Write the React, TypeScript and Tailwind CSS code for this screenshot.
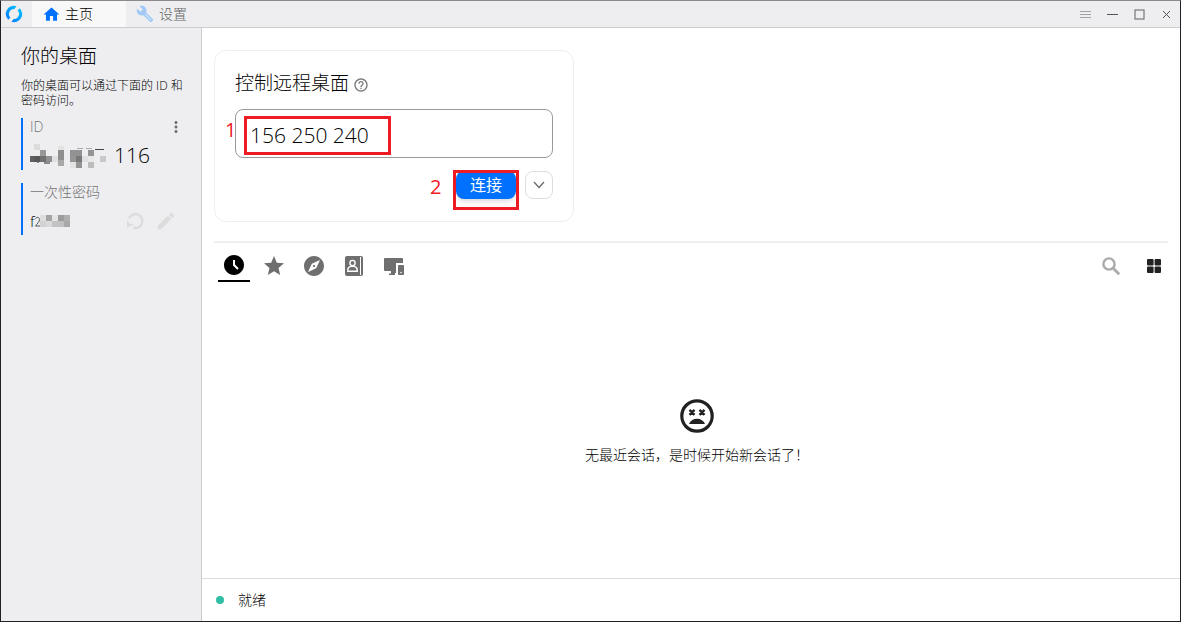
import { useState } from "react";
import {
  MdAccessTimeFilled,
  MdEdit,
  MdExplore,
  MdHelpOutline,
  MdHome,
  MdMoreVert,
  MdStar,
} from "react-icons/md";

type Block = [x: number, y: number, fill: string];

const idBlocks: Block[] = [
  [8, 4, "#dcdcdc"],
  [32, 6, "#e3e3e4"],
  [14, 10, "#989898"],
  [32, 10, "#8f8f8f"],
  [44, 10, "#929292"],
  [50, 10, "#929292"],
  [62, 10, "#959595"],
  [4, 16, "#606060"],
  [8, 16, "#585858"],
  [14, 16, "#707070"],
  [20, 16, "#8f8f8f"],
  [26, 16, "#e0e0e2"],
  [32, 16, "#8f8f8f"],
  [44, 16, "#959595"],
  [50, 16, "#787878"],
  [56, 16, "#e0e0e2"],
  [62, 16, "#e8e8e8"],
  [74, 16, "#c8c8c9"],
  [32, 20, "#a8a8a8"],
  [44, 22, "#e2e2e3"],
  [50, 22, "#949494"],
  [62, 22, "#bdbdbe"],
];

const passwordBlocks: Block[] = [
  [14, 6, "#dededf"],
  [20, 6, "#a3a3a3"],
  [26, 6, "#e4e4e5"],
  [32, 6, "#9c9c9c"],
  [38, 6, "#b0b0b0"],
  [14, 12, "#d2d2d3"],
  [20, 12, "#dadadb"],
  [26, 12, "#c3c3c4"],
  [32, 12, "#c0c0c1"],
  [38, 12, "#a8a8a8"],
];

function Mosaic({ blocks }: { blocks: Block[] }) {
  return (
    <>
      {blocks.map(([x, y, fill]) => (
        <rect key={`${x}-${y}`} x={x} y={y} width="6" height="6" fill={fill} />
      ))}
    </>
  );
}

function LogoIcon() {
  return (
    <svg width="18" height="18" viewBox="0 0 18 18" fill="none">
      <defs>
        <linearGradient id="logo" x1="1" y1="17" x2="16" y2="2" gradientUnits="userSpaceOnUse">
          <stop offset="0" stopColor="#0071ff" />
          <stop offset="1" stopColor="#00c8ff" />
        </linearGradient>
      </defs>
      <path
        d="M11.6 1.3A8.1 8.1 0 0 0 3.2 14.7L5.4 12.5A5 5 0 0 1 9.3 4z"
        fill="url(#logo)"
      />
      <path
        d="M6.4 16.7A8.1 8.1 0 0 0 14.8 3.3L12.6 5.5A5 5 0 0 1 8.7 14z"
        fill="url(#logo)"
      />
    </svg>
  );
}

function WrenchIcon() {
  return (
    <svg width="18" height="18" viewBox="0 0 24 24">
      <path
        fill="#a0c9f5"
        d="M22.7 19l-9.1-9.1c.9-2.3.4-5-1.5-6.9-2-2-5-2.4-7.4-1.3L9 6 6 9 1.6 4.7C.4 7.1.9 10.1 2.9 12.1c1.9 1.9 4.6 2.4 6.9 1.5l9.1 9.1c.4.4 1 .4 1.4 0l2.3-2.3c.5-.4.5-1.1.1-1.4z"
      />
      <path d="M12.5 12.5l7 7" stroke="#d5e6f8" strokeWidth="1.4" strokeLinecap="round" />
    </svg>
  );
}

function RefreshIcon() {
  return (
    <svg width="20" height="20" viewBox="0 0 20 20" fill="none" stroke="currentColor">
      <path d="M4 7.2A7 7 0 1 1 8 16.6" strokeWidth="2.4" />
      <path d="M2 9.5v7l7.500-3.500H5z" fill="currentColor" stroke="none" />
    </svg>
  );
}

function SearchIcon() {
  return (
    <svg width="25" height="25" viewBox="0 0 25 25" fill="none" stroke="currentColor">
      <circle cx="10" cy="10" r="5.6" strokeWidth="2.4" />
      <path d="M14.2 14.2l6 6" strokeWidth="2.8" />
    </svg>
  );
}

function AddressBookIcon() {
  return (
    <svg width="20" height="20" viewBox="0 0 20 20" fill="none">
      <rect x="1" y="0" width="18" height="20" rx="2" fill="#6f6f6f" />
      <path d="M16.5 1v18" stroke="#fff" strokeWidth="1" />
      <circle cx="8.5" cy="7" r="2.6" stroke="#fff" strokeWidth="1.4" />
      <path
        d="M3.8 15.3v-1.5c0-1.8 1.3-3 3-3.5h3.4c1.7.5 3 1.7 3 3.5v1.5z"
        stroke="#fff"
        strokeWidth="1.4"
      />
    </svg>
  );
}

function DevicesIcon() {
  return (
    <svg width="22" height="20" viewBox="0 0 22 20" fill="#6f6f6f">
      <rect x="1" y="2" width="19" height="13" rx="1" />
      <path d="M8 14h5v3h-1v2H6v-1.5h2z" />
      <rect x="13" y="7" width="9" height="13" fill="#fff" />
      <rect x="15" y="9" width="6" height="10" rx="1" />
      <circle cx="18" cy="16.500" r="0.8" fill="#fff" />
    </svg>
  );
}

function DizzyFaceIcon() {
  return (
    <svg width="34" height="34" viewBox="0 0 34 34" fill="none" stroke="#212121">
      <circle cx="17" cy="17" r="15.2" strokeWidth="3.2" />
      <path d="M9.5 10.8l5 5m0-5l-5 5M19.5 10.8l5 5m0-5l-5 5" strokeWidth="2.4" />
      <path d="M9 25c1.2-3.3 4.3-5.3 8-5.3s6.8 2 8 5.3z" fill="#212121" stroke="none" />
    </svg>
  );
}

const peerTabs = [
  { label: "最近会话", icon: <MdAccessTimeFilled size={24} /> },
  { label: "收藏", icon: <MdStar size={24} /> },
  { label: "已发现", icon: <MdExplore size={24} /> },
  { label: "地址簿", icon: <AddressBookIcon /> },
  { label: "可访问的设备", icon: <DevicesIcon /> },
];

function TitleBar() {
  return (
    <header className="flex h-[27px] border-b border-[#cdcdcf] bg-[#eeeef0]">
      <div className="flex w-[31px] items-center pl-1">
        <LogoIcon />
      </div>
      <nav className="flex text-sm">
        <a href="#home" className="flex w-[94px] items-center gap-1 bg-[#f8f8f8] pl-[10px] text-black">
          <MdHome size={19} color="#0071ff" />
          主页
        </a>
        <a href="#settings" className="flex items-center gap-[5px] pl-[10px] text-[#666]">
          <WrenchIcon />
          设置
        </a>
      </nav>
      <div className="ml-auto flex">
        <button aria-label="菜单" className="flex w-[27px] items-center justify-center">
          <svg width="11" height="9" viewBox="0 0 11 9" stroke="#a2a2a4">
            <path d="M0 1.5h11M0 4.5h11M0 7.5h11" />
          </svg>
        </button>
        <button aria-label="最小化" className="flex w-[27px] items-center justify-center">
          <svg width="11" height="9" viewBox="0 0 11 9" stroke="#555">
            <path d="M0 4.5h11" />
          </svg>
        </button>
        <button aria-label="最大化" className="flex w-[27px] items-center justify-center">
          <svg width="11" height="11" viewBox="0 0 11 11" fill="none" stroke="#77777a">
            <rect x="1" y="1" width="9" height="9" strokeWidth="1.2" />
          </svg>
        </button>
        <button aria-label="关闭" className="flex w-[27px] items-center justify-center">
          <svg width="9" height="9" viewBox="0 0 9 9" stroke="#555">
            <path d="M1 1l7 7M8 1l-7 7" />
          </svg>
        </button>
      </div>
    </header>
  );
}

function Sidebar() {
  return (
    <aside className="w-[201px] shrink-0 border-r border-[#cdcdcf] bg-[#eeeef0] pt-[14px] pr-4 pl-5">
      <h1 className="text-[19px] leading-7 text-black">你的桌面</h1>
      <p className="mt-2 text-xs leading-[15px] text-black">
        你的桌面可以通过下面的 ID 和密码访问。
      </p>
      <section className="mt-[10px] h-[52px] border-l-2 border-[#0071ff] pl-[7px]">
        <div className="flex h-[18px] items-center justify-between text-sm text-[#757577]">
          ID
          <button aria-label="更多" className="text-[#6f6f6f]">
            <MdMoreVert size={18} />
          </button>
        </div>
        <div className="flex h-10 items-center text-[21px] text-black">
          <svg width="84" height="32" viewBox="4 0 84 32" role="img" aria-label="ID">
            <path d="M3 18h7M12 19v4M18 23h6" stroke="#222" />
            <path d="M51 8.5h6M60 8.5h6" stroke="#aaa" />
            <path d="M69 9.5h9" stroke="#444" />
            <Mosaic blocks={idBlocks} />
          </svg>
          116
        </div>
      </section>
      <section className="mt-[13px] h-[52px] border-l-2 border-[#0071ff] pl-[7px]">
        <div className="flex h-[18px] items-center text-sm text-[#757577]">一次性密码</div>
        <div className="flex h-10 items-center pr-2 text-[15px] text-black">
          f
          <svg width="40" height="24" viewBox="9 0 40 24" role="img" aria-label="密码">
            <path d="M9.5 10c1-2.5 4-2 4 .5 0 2-2 4-4 6.5h5" fill="none" stroke="#555" />
            <Mosaic blocks={passwordBlocks} />
          </svg>
          <div className="ml-auto flex items-center gap-[10px] text-[#dcdcdd]">
            <button aria-label="刷新密码">
              <RefreshIcon />
            </button>
            <button aria-label="修改密码">
              <MdEdit size={22} />
            </button>
          </div>
        </div>
      </section>
    </aside>
  );
}

function ConnectCard() {
  const [remoteId, setRemoteId] = useState("156 250 240");

  return (
    <form
      onSubmit={(e) => e.preventDefault()}
      className="h-[172px] w-[360px] rounded-xl border border-[#eee] px-5 pt-[18px]"
    >
      <div className="flex items-center gap-1">
        <label htmlFor="remote-id" className="text-[19px] leading-7 text-black">
          控制远程桌面
        </label>
        <MdHelpOutline size={16} color="#777" className="mt-1" />
      </div>
      <div className="relative mt-3">
        <input
          id="remote-id"
          type="text"
          value={remoteId}
          onChange={(e) => setRemoteId(e.target.value)}
          className="h-[49px] w-full rounded-lg border border-[#999] px-[14px] pt-[2px] text-[21px] text-black outline-none"
        />
        <span className="pointer-events-none absolute top-[7px] left-[9px] h-[39px] w-[147px] border-3 border-[#ed1c24]" />
        <span className="absolute top-[7px] -left-[10px] text-xl leading-7 font-normal text-[#ed1c24]">1</span>
      </div>
      <div className="mt-[13px] flex justify-end gap-[9px]">
        <div className="relative">
          <span className="absolute top-0 -left-[26px] text-xl leading-8 font-normal text-[#ed1c24]">2</span>
          <button
            type="submit"
            className="flex h-7 w-[60px] items-center justify-center rounded-lg bg-[#0071ff] text-base font-normal text-white shadow-md"
          >
            连接
          </button>
          <span className="pointer-events-none absolute -top-px -left-[3px] h-10 w-[66px] border-3 border-[#ed1c24]" />
        </div>
        <button
          type="button"
          aria-label="更多连接方式"
          className="flex size-7 items-center justify-center rounded-lg border border-[#ddd]"
        >
          <svg width="12" height="8" viewBox="0 0 12 8" fill="none" stroke="#666" strokeWidth="1.2">
            <path d="M1 1l5 5.5L11 1" />
          </svg>
        </button>
      </div>
    </form>
  );
}

function PeerTabs() {
  const [active, setActive] = useState(0);

  return (
    <div className="mr-3 flex h-[39px] items-stretch">
      <div className="flex gap-2 pl-1">
        {peerTabs.map((tab, index) => (
          <button
            key={tab.label}
            aria-label={tab.label}
            onClick={() => setActive(index)}
            className={
              index === active
                ? "flex w-8 items-center justify-center border-b-2 border-black pt-[7px] text-black"
                : "flex w-8 items-center justify-center border-b-2 border-transparent pt-[9px] text-[#6f6f6f]"
            }
          >
            {tab.icon}
          </button>
        ))}
      </div>
      <div className="ml-auto flex items-center gap-5 pt-[7px] pr-1">
        <button aria-label="搜索" className="text-[#aaa]">
          <SearchIcon />
        </button>
        <button aria-label="视图" className="text-[#222]">
          <svg width="20" height="20" viewBox="0 0 20 20" fill="currentColor">
            <rect x="3" y="3" width="6.6" height="6.4" rx="1" />
            <rect x="10.6" y="3" width="6.4" height="6.4" rx="1" />
            <rect x="3" y="10.6" width="6.6" height="6.4" rx="1" />
            <rect x="10.6" y="10.6" width="6.4" height="6.4" rx="1" />
          </svg>
        </button>
      </div>
    </div>
  );
}

export default function App() {
  return (
    <div className="flex min-h-screen flex-col border border-t-[#8a888c] border-r-[#222026] border-b-[#222026] border-l-[#222026] bg-white font-['Open_Sans','Noto_Sans_CJK_SC',sans-serif] font-light">
      <TitleBar />
      <div className="flex grow">
        <Sidebar />
        <main className="flex min-w-0 grow flex-col">
          <div className="flex grow flex-col pt-[22px] pl-3">
            <ConnectCard />
            <hr className="mt-[19px] mr-3 border-t-2 border-[#efefef]" />
            <PeerTabs />
            <div className="flex grow flex-col items-center justify-center gap-3 pt-[3px] text-sm text-black">
              <DizzyFaceIcon />
              <p>无最近会话，是时候开始新会话了！</p>
            </div>
          </div>
          <footer className="flex h-[43px] items-center gap-[14px] border-t border-[#dcdcde] pl-[14px] text-sm text-black">
            <span className="size-2 rounded-full bg-[#32bea6]" />
            就绪
          </footer>
        </main>
      </div>
    </div>
  );
}
